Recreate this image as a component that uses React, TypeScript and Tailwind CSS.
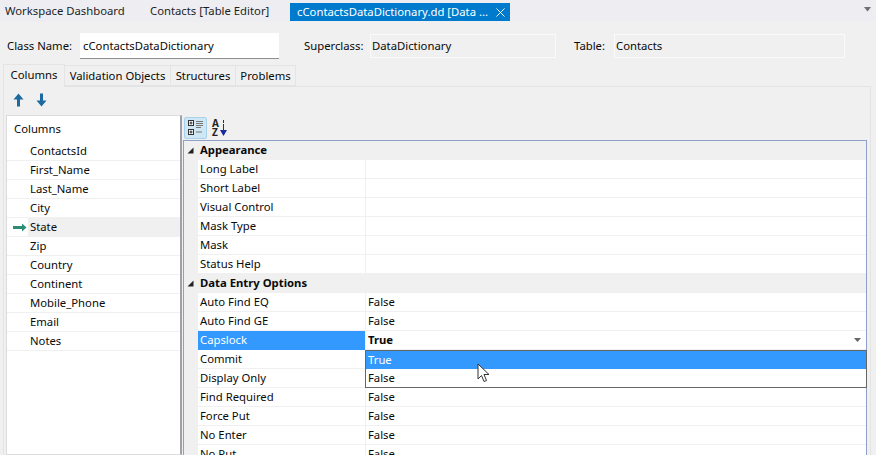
const FONT = "font-['Noto_Sans',sans-serif]";

const columns = ['ContactsId', 'First_Name', 'Last_Name', 'City', 'State', 'Zip', 'Country', 'Continent', 'Mobile_Phone', 'Email', 'Notes'];

type Row = { label: string; value?: string; selected?: boolean };
type Section = { title: string; rows: Row[] };

const sections: Section[] = [
  {
    title: 'Appearance',
    rows: [
      { label: 'Long Label' },
      { label: 'Short Label' },
      { label: 'Visual Control' },
      { label: 'Mask Type' },
      { label: 'Mask' },
      { label: 'Status Help' },
    ],
  },
  {
    title: 'Data Entry Options',
    rows: [
      { label: 'Auto Find EQ', value: 'False' },
      { label: 'Auto Find GE', value: 'False' },
      { label: 'Capslock', value: 'True', selected: true },
      // values of the next two rows sit behind the open dropdown
      { label: 'Commit' },
      { label: 'Display Only' },
      { label: 'Find Required', value: 'False' },
      { label: 'Force Put', value: 'False' },
      { label: 'No Enter', value: 'False' },
      { label: 'No Put', value: 'False' },
    ],
  },
];

function DocTabs() {
  return (
    <div className="flex h-[22px] items-center whitespace-nowrap bg-[#eeeef2] text-[#1e1e1e]">
      <span className="ml-[5px] w-[145px]">Workspace Dashboard</span>
      <span className="w-[140px]">Contacts [Table Editor]</span>
      <div className="mt-[2px] flex h-[18px] w-[220px] items-center justify-between bg-[#007acc] pl-[7px] pr-[5px] text-white">
        <span>cContactsDataDictionary.dd [Data ...</span>
        <svg width="9" height="9" viewBox="0 0 9 9" className="stroke-white">
          <path d="M0.5 0.5 L8.5 8.5 M8.5 0.5 L0.5 8.5" fill="none" />
        </svg>
      </div>
      <svg width="10" height="5" viewBox="0 0 10 5" className="ml-auto mr-[3px] -mt-[4px] fill-[#6f6f6f]">
        <path d="M1 0 H8 L4.5 4.5 Z" />
      </svg>
    </div>
  );
}

function ClassRow() {
  return (
    <div className="flex h-[42px] items-center bg-[#f0f0f0] pb-[1px] pt-[7px]">
      <span className="ml-[7px] w-[73px]">Class Name:</span>
      <div className="flex h-[26px] w-[199px] items-center border-b border-[#8e8e8e] bg-white pl-[3px]">cContactsDataDictionary</div>
      <span className="ml-[25px] w-[66px]">Superclass:</span>
      <div className="flex h-[24px] w-[186px] items-center border border-[#fafafa] pl-[1px]">DataDictionary</div>
      <span className="ml-[18px] w-[40px]">Table:</span>
      <div className="flex h-[24px] w-[231px] items-center border border-[#fafafa] pl-[1px]">Contacts</div>
    </div>
  );
}

function PageTabs() {
  const tabs = [
    ['Validation Objects', 'w-[106px]'],
    ['Structures', 'w-[65px]'],
    ['Problems', 'w-[60px]'],
  ];
  return (
    <div className="flex h-[22px] items-end bg-[#f0f0f0] pl-[3px]">
      <div className="z-10 -mb-[1px] flex h-[23px] w-[62px] items-center justify-center border border-b-0 border-[#e4e4e4] bg-[#f0f0f0] pb-[3px]">Columns</div>
      {tabs.map(([name, width]) => (
        <div key={name} className={`flex h-[21px] items-center justify-center whitespace-nowrap border-y border-r border-[#e4e4e4] ${width}`}>
          {name}
        </div>
      ))}
    </div>
  );
}

function ArrowIcon({ down }: { down?: boolean }) {
  return (
    <svg width="11" height="14" viewBox="0 0 11 14" className={`fill-[#1e6aa0] ${down ? 'rotate-180' : ''}`}>
      <path d="M5.5 0.5 L10.5 6.5 H7 V13.5 H4 V6.5 H0.5 Z" />
    </svg>
  );
}

function ColumnsList() {
  return (
    <div className="h-[340px] w-[176px] shrink-0 border-y border-l border-r-2 border-[#a0a0a8] border-y-[#dcdcdc] border-l-[#dcdcdc] bg-white">
      <div className="flex h-[26px] items-center pl-[7px]">Columns</div>
      {columns.map((name) => {
        const current = name === 'State';
        return (
          <div key={name} className="flex h-[19px] border-b border-[#f0f0f0]">
            <div className="flex w-[21px] shrink-0 items-center justify-end pr-[1px]">
              {current && (
                <svg width="14" height="9" viewBox="0 0 14 9" className="fill-[#2e8b74]">
                  <path d="M0 3 H9 V0.5 L13.5 4.5 L9 8.5 V6 H0 Z" />
                </svg>
              )}
            </div>
            <div className={`flex flex-1 items-center pl-[2px] ${current ? 'bg-[#f0f0f0]' : ''}`}>{name}</div>
          </div>
        );
      })}
    </div>
  );
}

function GridToolbar() {
  return (
    <div className="flex h-[25px] items-center gap-[5px] pl-[1px]">
      <div className="flex h-[22px] w-[23px] items-center justify-center rounded-[2px] border border-[#a8d2ec] bg-[#cfe6f5]">
        <svg width="17" height="17" viewBox="0 0 17 17" fill="none">
          <rect x="1.5" y="1.5" width="5" height="5" fill="#fff" stroke="#333" />
          <rect x="1.5" y="10.5" width="5" height="5" fill="#fff" stroke="#333" />
          <path d="M2.5 4 H5.5 M4 2.5 V5.5 M2.5 13 H5.5 M4 11.5 V14.5" stroke="#222" />
          <path d="M9 2.5 H16 M9 4.5 H16 M9 6.5 H16 M9 8.5 H14 M9 13 H15" stroke="#777" />
        </svg>
      </div>
      <div className="relative h-[18px] w-[16px]">
        <span className="absolute left-0 top-[0px] text-[10px] font-bold leading-[8px] text-[#222]">A</span>
        <span className="absolute left-0 top-[9px] text-[10px] font-bold leading-[8px] text-[#222]">Z</span>
        <svg width="7" height="17" viewBox="0 0 7 17" className="absolute left-[8px] top-[1px]">
          <path d="M3.5 0 V3 M3.5 4 V11" stroke="#1a2a9c" />
          <path d="M0 10 H7 L3.5 16 Z" fill="#1a2a9c" />
        </svg>
      </div>
    </div>
  );
}

function Caret() {
  return (
    <svg width="7" height="7" viewBox="0 0 7 7" className="fill-[#222]">
      <path d="M6.5 0.5 V6.5 H0.5 Z" />
    </svg>
  );
}

function PropertyGrid() {
  return (
    <div className="relative h-[315px] border border-b-0 border-[#8e9fc9] bg-white">
      {sections.map((section) => (
        <div key={section.title}>
          <div className="flex h-[19px] items-center bg-[#f0f0f0] pb-[2px]">
            <div className="flex w-[13px] justify-center pt-[2px]">
              <Caret />
            </div>
            <span className="pl-[3px] font-bold">{section.title}</span>
          </div>
          {section.rows.map((row) => (
            <div key={row.label} className="flex h-[19px] bg-[#f0f0f0]">
              <div
                className={`ml-[14px] flex w-[167px] items-center border-b pl-[2px] ${
                  row.selected ? 'border-[#3399ff] bg-[#3399ff] text-white' : 'border-[#f0f0f0] bg-white'
                }`}
              >
                {row.label}
              </div>
              <div className={`flex flex-1 items-center justify-between border-b border-l border-[#f0f0f0] bg-white pl-[2px] pr-[5px] ${row.selected ? 'font-bold' : ''}`}>
                {row.value}
                {row.selected && (
                  <svg width="7" height="4" viewBox="0 0 7 4" className="fill-[#666]">
                    <path d="M0 0 H7 L3.5 4 Z" />
                  </svg>
                )}
              </div>
            </div>
          ))}
        </div>
      ))}
      <div className="absolute left-[181px] top-[209px] h-[38px] w-[502px] border border-[#666] bg-white">
        <div className="flex h-[18px] items-center bg-[#3399ff] pl-[2px] text-white">True</div>
        <div className="flex h-[18px] items-center pl-[2px]">False</div>
      </div>
      <svg width="14" height="21" viewBox="0 0 14 21" className="absolute left-[293px] top-[222px]">
        <path d="M1 1 V16 L4.5 12.5 L7 18.5 L9.5 17.5 L7 11.5 H12 Z" fill="#fff" stroke="#333" strokeWidth="1" />
      </svg>
    </div>
  );
}

export default function App() {
  return (
    <div className={`h-[455px] w-[876px] overflow-hidden bg-[#f0f0f0] text-[11.3px] leading-[16px] text-[#0a0a0a] ${FONT}`}>
      <DocTabs />
      <ClassRow />
      <PageTabs />
      <div className="ml-[3px] mr-[5px] border-l border-r border-t border-[#e4e4e4] pl-[2px] pr-[3px]">
        <div className="flex h-[28px] items-center gap-[12px] pb-[2px] pl-[7px]">
          <ArrowIcon />
          <ArrowIcon down />
        </div>
        <div className="flex gap-[1px]">
          <ColumnsList />
          <div className="flex-1">
            <GridToolbar />
            <PropertyGrid />
          </div>
        </div>
      </div>
    </div>
  );
}
